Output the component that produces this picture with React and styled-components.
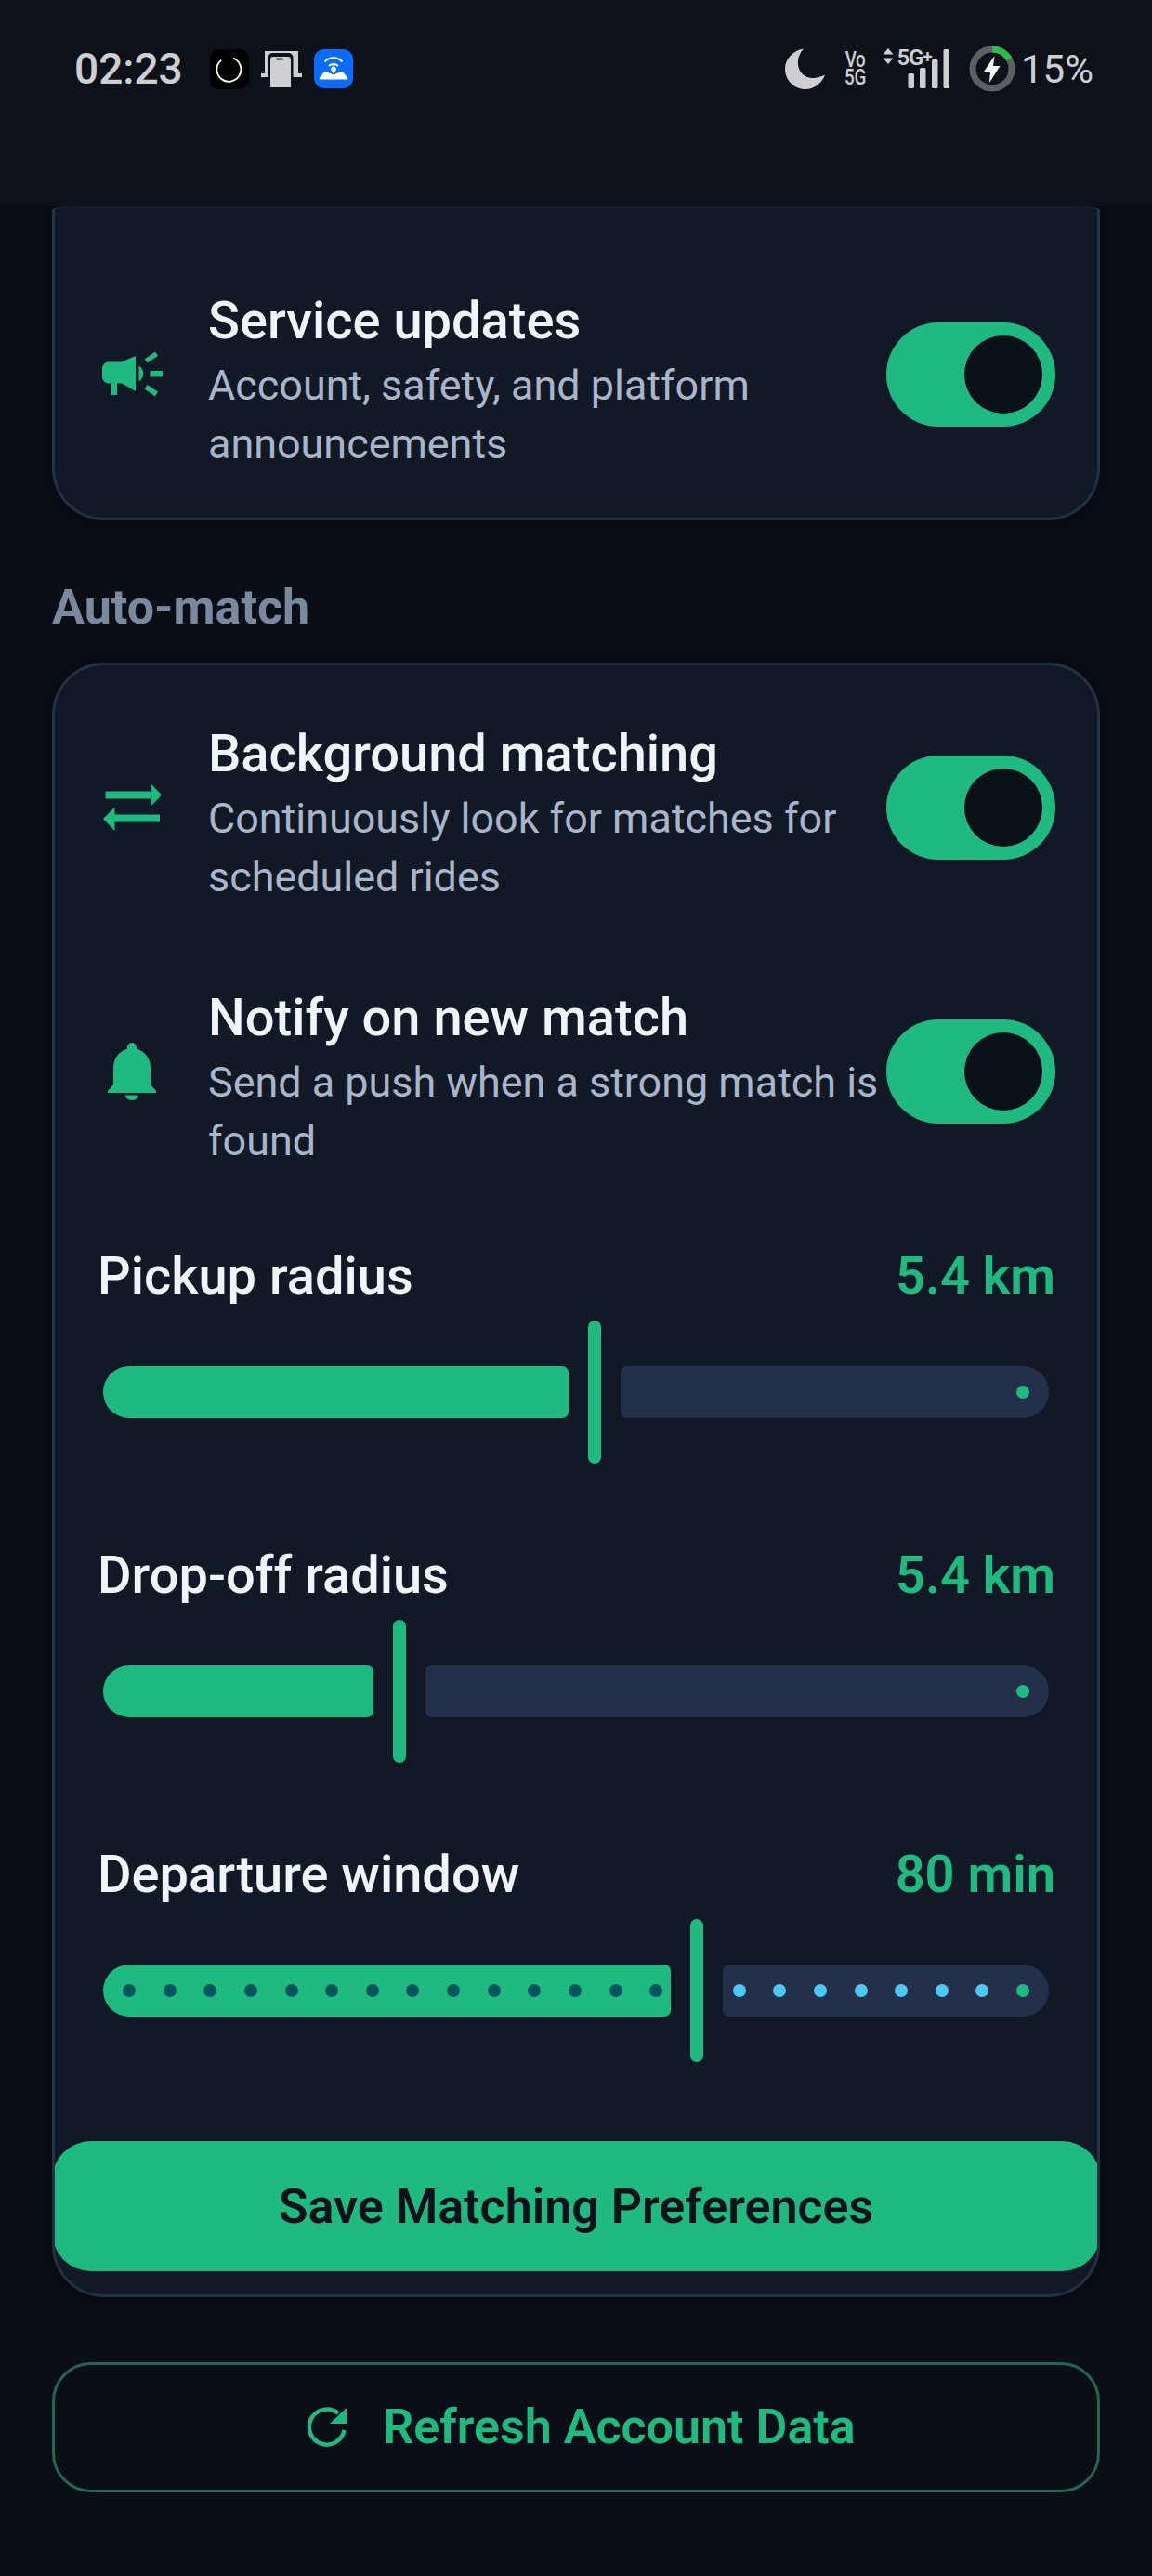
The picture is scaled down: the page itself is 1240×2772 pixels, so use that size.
import React from "react";
import styled, { createGlobalStyle } from "styled-components";

const GREEN = "#1eba7f";

const GlobalStyle = createGlobalStyle`
  html, body {
    margin: 0;
    padding: 0;
    background: #0a0e16;
  }
  * {
    box-sizing: border-box;
  }
`;

const Screen = styled.div`
  width: 1240px;
  height: 2772px;
  display: flex;
  flex-direction: column;
  overflow: hidden;
  background: #0a0e16;
  font-family: Roboto, "Noto Sans", sans-serif;
`;

const Header = styled.header`
  height: 222px;
  flex: none;
  padding: 49px 63px 0 80px;
  background: #0d1119;
`;

const StatusBar = styled.div`
  height: 50px;
  display: flex;
  align-items: center;
  justify-content: space-between;
  color: #cfcfd3;
`;

const StatusGroup = styled.div`
  display: flex;
  align-items: center;
  gap: ${(p) => p.$gap}px;
`;

const Clock = styled.span`
  font-size: 46px;
  font-weight: 500;
  margin-right: 16px;
`;

const NetStack = styled.div`
  width: 23px;
  margin-right: -2px;
  display: flex;
  flex-direction: column;
  align-items: center;
  font-size: 23px;
  font-weight: 500;
  line-height: 19px;
  letter-spacing: -0.5px;
  transform: scaleX(0.82);
`;

const SignalWrap = styled.div`
  position: relative;
  width: 72px;
  height: 46px;
  margin-right: 1px;
`;

const SignalTag = styled.span`
  position: absolute;
  left: 16px;
  top: -2px;
  font-size: 24px;
  font-weight: 600;
  line-height: 24px;
  letter-spacing: -1.2px;
`;

const SignalPlus = styled.span`
  font-size: 19px;
  vertical-align: 3px;
`;

const Percent = styled.span`
  font-size: 42px;
  font-weight: 400;
  margin-left: -13.5px;
`;

const Scroller = styled.main`
  flex: 1;
  min-height: 0;
  overflow: hidden;
  padding: 0 56px;
`;

const Card = styled.section`
  border: 3.5px solid #243045;
  border-radius: 56px;
  background: #111927;
  overflow: hidden;
  box-shadow: 0 0 32px rgba(0, 0, 0, 0.4);
`;

// scrolled under the header, so only a sliver of its top edge shows
const TopCard = styled(Card)`
  height: 338px;
  padding: 88px 45px 0 46px;
  border-top: none;
  border-radius: 24px 24px 56px 56px / 4px 4px 56px 56px;
`;

const SectionLabel = styled.h2`
  margin: 0;
  height: 153px;
  padding-top: 64px;
  font-size: 52px;
  line-height: 60px;
  font-weight: 700;
  color: #7b899f;
`;

const SettingsCard = styled(Card)`
  padding: 16px 45px 24.5px 46px;
`;

const Row = styled.div`
  display: flex;
  align-items: center;
  padding: 44px 0;
`;

const TopRow = styled(Row)`
  padding: 0;
`;

const IconBox = styled.div`
  width: 74px;
  flex: none;
  margin: 0 45px 11px 0;
  display: flex;
  justify-content: center;
  color: ${GREEN};
`;

const RowText = styled.div`
  flex: 1;
  min-width: 0;
`;

const RowTitle = styled.div`
  font-size: 56px;
  line-height: 70px;
  font-weight: 500;
  color: #f0f4fb;
`;

const RowDesc = styled.div`
  margin: 3px 0 -3px;
  font-size: 44.9px;
  line-height: 63px;
  color: #a9b5c9;
`;

const Toggle = styled.div`
  width: 182px;
  height: 112px;
  flex: none;
  margin-bottom: 11px;
  padding: 14px;
  border-radius: 56px;
  background: ${GREEN};
  display: flex;
  justify-content: flex-end;
`;

const ToggleThumb = styled.div`
  width: 84px;
  height: 84px;
  border-radius: 50%;
  background: #0b1119;
`;

const SliderGroup = styled.div`
  padding-top: 38px;
`;

const SliderBlock = styled.div`
  margin-bottom: 85px;
`;

const SliderHead = styled.div`
  display: flex;
  align-items: center;
  justify-content: space-between;
  height: 70px;
  margin-bottom: 13px;
`;

const SliderLabel = styled.span`
  font-size: 56px;
  font-weight: 500;
  color: #f0f4fb;
`;

const SliderValue = styled.span`
  font-size: 56px;
  font-weight: 600;
  color: ${GREEN};
`;

const SliderTrack = styled.div`
  height: 154px;
  padding: 0 7px 0 6px;
  display: flex;
  align-items: center;
`;

const ActivePart = styled.div`
  width: ${(p) => p.$width}px;
  height: 56px;
  flex: none;
  display: flex;
  align-items: center;
  gap: 29.64px;
  padding-left: 21px;
  border-radius: 28px 7px 7px 28px;
  background: ${GREEN};
`;

const Handle = styled.div`
  width: 14px;
  height: 154px;
  flex: none;
  margin: 0 21px;
  border-radius: 7px;
  background: ${GREEN};
`;

const RestPart = styled.div`
  flex: 1;
  height: 56px;
  display: flex;
  align-items: center;
  justify-content: flex-end;
  gap: 29.64px;
  padding-right: 21px;
  border-radius: 7px 28px 28px 7px;
  background: #243049;
`;

const Tick = styled.span`
  width: 14px;
  height: 14px;
  flex: none;
  border-radius: 50%;
  background: ${(p) => p.$color};
`;

// runs edge to edge and gets its outer corners cut by the card
const PrimaryButton = styled.button`
  display: block;
  width: calc(100% + 98px);
  height: 140px;
  margin: 0 -48.5px 0 -49.5px;
  padding: 0;
  border: none;
  border-radius: 42px;
  background: ${GREEN};
  color: #08121a;
  font-family: inherit;
  font-size: 52px;
  font-weight: 600;
`;

const RefreshButton = styled.button`
  width: 100%;
  height: 140px;
  margin-top: 70px;
  padding: 0 0 0 12px;
  display: flex;
  align-items: center;
  justify-content: center;
  gap: 38px;
  border: 3.5px solid #236650;
  border-radius: 42px;
  background: #0a0f17;
  color: ${GREEN};
  font-family: inherit;
  font-size: 52px;
  font-weight: 600;
`;

const MoonIcon = () => (
  <svg width="44" height="44" viewBox="0 0 44 44">
    <path d="M20 0.5C12 9 12 21 19 28c6 5.500 15 5 24 .5C39.500 38 31 44 22 44 9.500 44 0 34 0 22 0 12 8 2.500 20 .5Z" fill="#cfcfd3" />
  </svg>
);

const SignalBars = () => (
  <svg width="72" height="46" viewBox="0 0 72 46" style={{ display: "block" }}>
    <rect x="27.500" y="28" width="6.500" height="16" rx="1.500" fill="#cfcfd3" />
    <rect x="40" y="22" width="6.500" height="22" rx="1.500" fill="#cfcfd3" />
    <rect x="53" y="13" width="6.500" height="31" rx="1.500" fill="#cfcfd3" />
    <rect x="65.500" y="2" width="6.500" height="42" rx="1.500" fill="#cfcfd3" />
    <path d="M6 1l5.500 6.500H.5L6 1Zm0 17-5.500-6.500h11L6 18Z" fill="#cfcfd3" />
  </svg>
);

const ChargeRing = () => (
  <svg width="50" height="50" viewBox="0 0 50 50">
    <circle cx="25" cy="25" r="21" fill="none" stroke="#5e5f63" strokeWidth="7" />
    <path d="M25 4A21 21 0 0 1 43.200 14.500" fill="none" stroke="#2eb94a" strokeWidth="7" />
    <path d="M27.500 11 16 28h7l-1 12 11.500-18h-7.500l1.500-11Z" fill="#fff" />
  </svg>
);

const SpinnerApp = () => (
  <svg width="42" height="43" viewBox="0 0 42 43">
    <rect width="42" height="43" rx="10" fill="#000" />
    <path d="M20 9a13 13 0 1 1-11 7" transform="rotate(24 21 21.500)" fill="none" stroke="#fff" strokeWidth="1.800" />
  </svg>
);

const MirrorApp = () => (
  <svg width="44" height="39" viewBox="0 0 44 39">
    <path d="M4 0h36v24H4Z" fill="#cfcfd3" />
    <path d="M0 24h44v4H0Z" fill="#cfcfd3" />
    <rect x="7.500" y="2" width="27" height="40" rx="5" fill="#0d1119" />
    <path d="M10 9a3 3 0 0 1 3-3h16a3 3 0 0 1 3 3v30H10Z" fill="#cfcfd3" />
    <rect x="16.500" y="7.500" width="7" height="2" fill="#0d1119" />
  </svg>
);

const RouterApp = () => (
  <svg width="42" height="42" viewBox="0 0 42 42">
    <rect width="42" height="42" rx="11" fill="#0a6cff" />
    <path d="M7 32.500c-1.500 0-1.500-1-1-2L10 25.500c1-1.500 2-1.500 4-1l7 3 7-3c2-.5 3-.5 4 1l4 5c.5 1 .5 2-1 2Z" fill="#fff" />
    <path d="M21 26.500l-2.400-3.500a2.900 2.900 0 1 1 4.800 0Z" fill="#fff" />
    <path d="M16 18a7.500 7.500 0 0 1 10 0M11.500 13.500a13 13 0 0 1 19 0" fill="none" stroke="#fff" strokeWidth="2" />
  </svg>
);

const MegaphoneIcon = () => (
  <svg width="65" height="51" viewBox="0 0 65 51" fill="currentColor">
    <path d="M36 6v38L21 35.500h-5V48H9.500V35.500H7a7 7 0 0 1-7-7v-9a7 7 0 0 1 7-7h13.500Z" />
    <path d="M39.500 16.500a10 10 0 0 1 0 17Z" />
    <path d="M45.500 9.500 57 1.500l3 4.500-11.500 7.500ZM51.500 22H65v6.500H51.500ZM48.500 37 60 44.500l-3 5-11.500-8Z" />
  </svg>
);

const SwapIcon = () => (
  <svg width="63" height="51" viewBox="0 0 63 51" fill="currentColor">
    <path d="M2.500 8.500H51V0l12 12.500L51 25v-8.500H2.500Z" />
    <path d="M61 41.500H12.500V51L0 38l12.500-12.500v8H61Z" />
  </svg>
);

const BellIcon = () => (
  <svg width="52" height="62" viewBox="0 0 52 62" fill="currentColor">
    <path d="M26 0a5 5 0 0 1 5 5v1.500C41 9.500 46 18 46 28v17l6 7v2H0v-2l6-7V28C6 18 11 9.500 21 6.500V5a5 5 0 0 1 5-5Z" />
    <path d="M19 56.500h14a7 5.500 0 0 1-14 0Z" />
  </svg>
);

const RefreshIcon = () => (
  <svg width="43" height="43" viewBox="0 0 43 43">
    <path d="M39.500 25A19 19 0 1 1 33 7" fill="none" stroke="currentColor" strokeWidth="4.500" />
    <path d="M42 1v17H24Z" fill="currentColor" />
  </svg>
);

const TICK_DARK = "#00565f";
const TICK_LIGHT = "#4cc8f5";

// 23 stops: 14 on the filled part, one under the handle, the rest on the track
const TimeTicks = ({ count, color }) =>
  Array.from({ length: count }, (_, i) => <Tick key={i} $color={color} />);

const Slider = ({ label, value, width, ticks }) => (
  <SliderBlock>
    <SliderHead>
      <SliderLabel>{label}</SliderLabel>
      <SliderValue>{value}</SliderValue>
    </SliderHead>
    <SliderTrack>
      <ActivePart $width={width}>
        {ticks && <TimeTicks count={14} color={TICK_DARK} />}
      </ActivePart>
      <Handle />
      <RestPart>
        {ticks && <TimeTicks count={7} color={TICK_LIGHT} />}
        <Tick $color={GREEN} />
      </RestPart>
    </SliderTrack>
  </SliderBlock>
);

const SwitchRow = ({ icon, title, desc }) => (
  <Row>
    <IconBox>{icon}</IconBox>
    <RowText>
      <RowTitle>{title}</RowTitle>
      <RowDesc>{desc}</RowDesc>
    </RowText>
    <Toggle>
      <ToggleThumb />
    </Toggle>
  </Row>
);

export default function App() {
  return (
    <Screen>
      <GlobalStyle />
      <Header>
        <StatusBar>
          <StatusGroup $gap={13}>
            <Clock>02:23</Clock>
            <SpinnerApp />
            <MirrorApp />
            <RouterApp />
          </StatusGroup>
          <StatusGroup $gap={20}>
            <MoonIcon />
            <NetStack>
              <span>Vo</span>
              <span>5G</span>
            </NetStack>
            <SignalWrap>
              <SignalBars />
              <SignalTag>5G<SignalPlus>+</SignalPlus></SignalTag>
            </SignalWrap>
            <ChargeRing />
            <Percent>15%</Percent>
          </StatusGroup>
        </StatusBar>
      </Header>
      <Scroller>
        <TopCard>
          <TopRow>
            <IconBox><MegaphoneIcon /></IconBox>
            <RowText>
              <RowTitle>Service updates</RowTitle>
              <RowDesc>Account, safety, and platform announcements</RowDesc>
            </RowText>
            <Toggle>
              <ToggleThumb />
            </Toggle>
          </TopRow>
        </TopCard>
        <SectionLabel>Auto-match</SectionLabel>
        <SettingsCard>
          <SwitchRow
            icon={<SwapIcon />}
            title="Background matching"
            desc="Continuously look for matches for scheduled rides"
          />
          <SwitchRow
            icon={<BellIcon />}
            title="Notify on new match"
            desc="Send a push when a strong match is found"
          />
          <SliderGroup>
            <Slider label="Pickup radius" value="5.4 km" width={501} />
            <Slider label="Drop-off radius" value="5.4 km" width={291} />
            <Slider label="Departure window" value="80 min" width={611} ticks />
          </SliderGroup>
          <PrimaryButton>Save Matching Preferences</PrimaryButton>
        </SettingsCard>
        <RefreshButton>
          <RefreshIcon />
          Refresh Account Data
        </RefreshButton>
      </Scroller>
    </Screen>
  );
}
